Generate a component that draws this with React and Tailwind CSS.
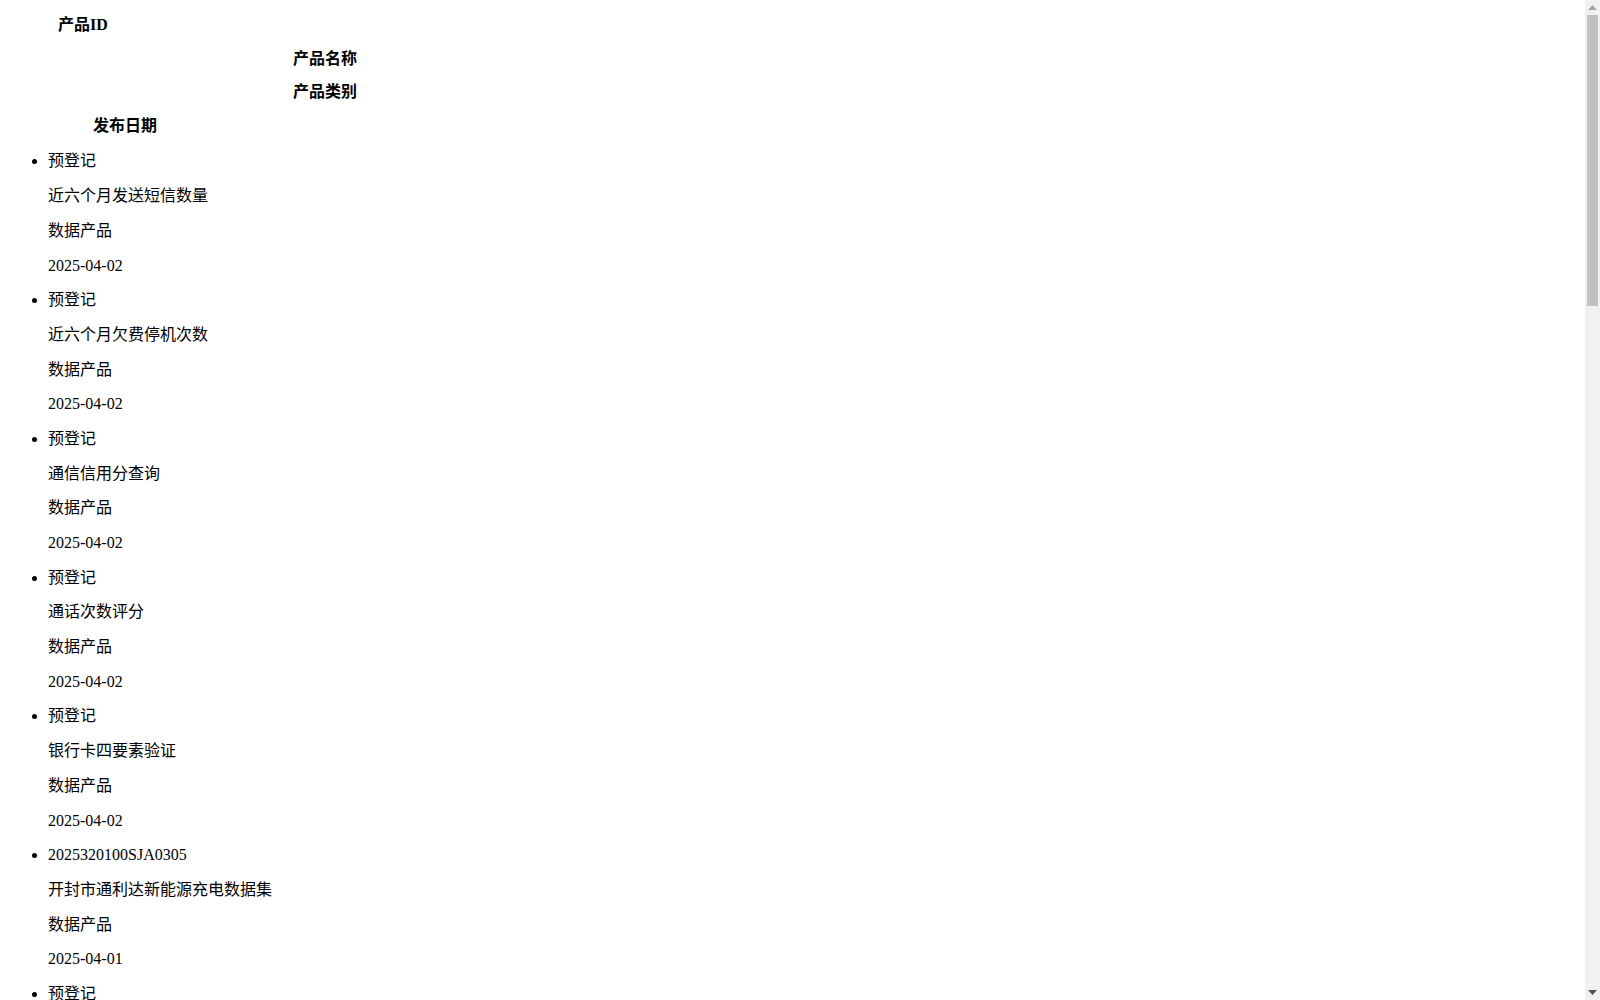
import React from "react";

const items = [
  ["预登记", "近六个月发送短信数量", "数据产品", "2025-04-02"],
  ["预登记", "近六个月欠费停机次数", "数据产品", "2025-04-02"],
  ["预登记", "通信信用分查询", "数据产品", "2025-04-02"],
  ["预登记", "通话次数评分", "数据产品", "2025-04-02"],
  ["预登记", "银行卡四要素验证", "数据产品", "2025-04-02"],
  ["2025320100SJA0305", "开封市通利达新能源充电数据集", "数据产品", "2025-04-01"],
  ["预登记", "手机号在网时长查询", "数据产品", "2025-04-01"],
  ["预登记", "手机号在网状态查询", "数据产品", "2025-04-01"],
  ["预登记", "运营商三要素验证", "数据产品", "2025-04-01"],
  ["2025320100SJA0304", "南京市公共交通客流数据集", "数据产品", "2025-03-31"],
  ["预登记", "企业工商信息查询", "数据产品", "2025-03-31"],
  ["预登记", "车辆违章信息查询", "数据产品", "2025-03-31"],
  ["2025320100SJA0303", "苏州市气象观测数据集", "数据产品", "2025-03-28"],
  ["预登记", "个人消费能力评估", "数据产品", "2025-03-28"],
  ["预登记", "近三个月流量使用情况", "数据产品", "2025-03-28"],
  ["2025320100SJA0302", "无锡市物流运输轨迹数据集", "数据产品", "2025-03-27"],
  ["预登记", "身份证二要素核验", "数据产品", "2025-03-27"],
  ["预登记", "企业信用评分查询", "数据产品", "2025-03-27"],
  ["2025320100SJA0301", "常州市电力负荷数据集", "数据产品", "2025-03-26"],
  ["预登记", "手机号归属地查询", "数据产品", "2025-03-26"],
  ["预登记", "近六个月通话时长", "数据产品", "2025-03-26"],
  ["2025320100SJA0300", "扬州市文旅客流数据集", "数据产品", "2025-03-25"],
  ["预登记", "车辆基本信息查询", "数据产品", "2025-03-25"],
];

export default function App() {
  return (
    <div
      className="bg-white text-black text-[16px] pt-[7.9px] pr-[15px]"
      style={{ fontFamily: '"Liberation Serif", "Noto Sans CJK SC", serif' }}
    >
      <div className="font-bold">
        <div className="leading-[33.8px] h-[33.8px] pl-[58px]">产品ID</div>
        <div className="leading-[33.8px] h-[33.8px] pl-[293px]">产品名称</div>
        <div className="leading-[33.8px] h-[33.8px] pl-[293px]">产品类别</div>
        <div className="leading-[33.8px] h-[33.8px] pl-[93px]">发布日期</div>
      </div>
      <ul className="list-disc ml-2 pl-10 mt-[1.4px]">
        {items.map((it, i) => (
          <li key={i}>
            {it.map((t, j) => (
              <div key={j} className="leading-[34.7px] h-[34.7px]">
                {t}
              </div>
            ))}
          </li>
        ))}
      </ul>

      {/* native-looking scrollbar */}
      <div className="fixed top-0 right-0 w-[15px] h-screen bg-[#f1f1f1] flex flex-col items-center">
        <div className="h-[15px] w-full flex items-center justify-center">
          <svg width="9" height="5" viewBox="0 0 9 5">
            <polygon points="0,5 4.5,0 9,5" fill="#a3a3a3" />
          </svg>
        </div>
        <div className="flex-1 w-full px-[2px]">
          <div className="h-[291px] w-full bg-[#c1c1c1]" />
        </div>
        <div className="h-[15px] w-full flex items-center justify-center">
          <svg width="9" height="5" viewBox="0 0 9 5">
            <polygon points="0,0 9,0 4.5,5" fill="#505050" />
          </svg>
        </div>
      </div>
    </div>
  );
}
